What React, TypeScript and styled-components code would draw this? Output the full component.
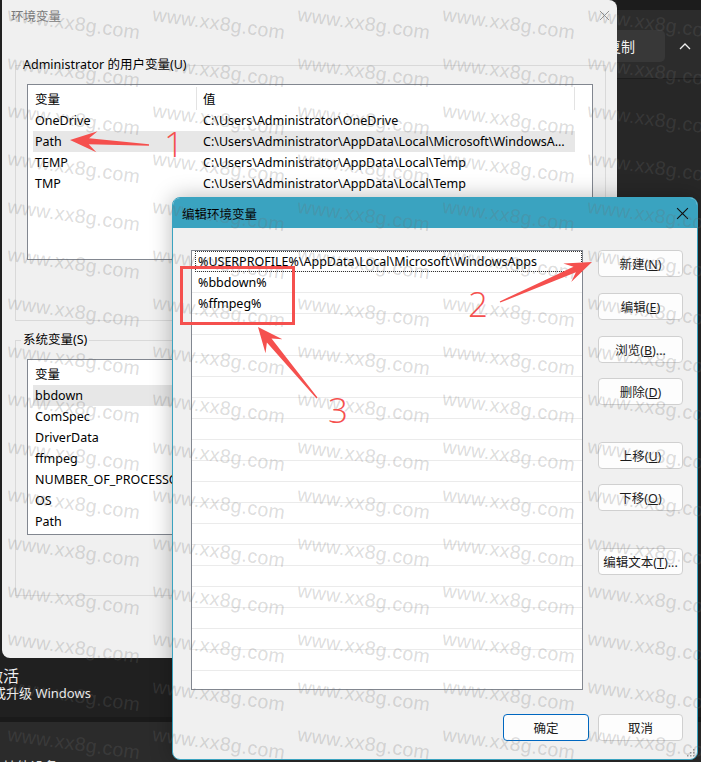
import React from "react";
import styled, { createGlobalStyle } from "styled-components";

const FONT = `"Noto Sans", "Noto Sans CJK SC", sans-serif`;

const GlobalStyle = createGlobalStyle`
  html, body { margin: 0; padding: 0; background: #202020; }
  body { font-family: ${FONT}; font-size: 12.5px; color: #000; }
  * { box-sizing: border-box; }
`;

const Page = styled.div`
  position: relative;
  width: 701px;
  height: 762px;
  overflow: hidden;
  background: #202020;
  font-family: ${FONT};
`;

const TopRow = styled.div`
  display: flex;
  height: 658px;
`;

const BackDialog = styled.div`
  margin-left: 2px;
  width: 615px;
  height: 658px;
  background: #f0f0f0;
  border-radius: 0 8px 8px 8px;
  display: flex;
  flex-direction: column;
  overflow: hidden;
`;

const BackTitleBar = styled.div`
  height: 30px;
  flex: none;
  display: flex;
  align-items: center;
  justify-content: space-between;
  padding: 0 7px 0 9px;
  color: #7a7a7a;
  font-size: 12.5px;
`;

const GroupBox = styled.fieldset<{ $top: number }>`
  margin: ${(p) => p.$top}px 0 0 13px;
  width: 591px;
  height: 264px;
  border: 1px solid #d9d9d9;
  padding: 11px 0 0 11px;
  min-width: 0;
`;

const GroupLabel = styled.legend`
  font-size: 12.5px;
  line-height: 16px;
  padding: 0 2px;
  margin-left: -6px;
  color: #000;
`;

const ListBox = styled.div<{ $h: number }>`
  width: 566px;
  height: ${(p) => p.$h}px;
  background: #fff;
  border: 1px solid #828790;
  padding-left: 5px;
  overflow: hidden;
`;

const ListHeader = styled.div`
  display: flex;
  height: 25px;
  padding-top: 2px;
`;

const HeaderCell = styled.div<{ $w: number; $pl: number }>`
  width: ${(p) => p.$w}px;
  flex: none;
  padding-left: ${(p) => p.$pl}px;
  border-right: 1px solid #e3e3e3;
  display: flex;
  align-items: center;
  font-size: 12.5px;
`;

const ListRow = styled.div<{ $sel?: boolean }>`
  display: flex;
  width: 542px;
  height: 21px;
  align-items: center;
  background: ${(p) => (p.$sel ? "#e7e7e7" : "transparent")};
  font-size: 12.5px;
  white-space: nowrap;
`;

const NameCell = styled.div`
  width: 164px;
  flex: none;
  padding-left: 2px;
  overflow: visible;
`;

const ValueCell = styled.div`
  width: 378px;
  flex: none;
  padding: 0 10px 0 6px;
  overflow: hidden;
  text-overflow: ellipsis;
`;

const RightPanel = styled.div`
  flex: 1;
  display: flex;
  flex-direction: column;
  background: #272727;
`;

const TopStrip = styled.div`
  height: 10px;
  background: #1c1c1c;
`;

const Toolbar = styled.div`
  height: 69px;
  background: #2c2c2c;
  border-bottom: 1px solid #1e1e1e;
  display: flex;
  align-items: flex-start;
  padding-top: 20px;
`;

const CopyButton = styled.div`
  width: 48px;
  height: 32px;
  background: #383838;
  border-radius: 0 5px 5px 0;
  display: flex;
  align-items: center;
  justify-content: flex-end;
  padding-right: 30px;
  overflow: hidden;
  white-space: nowrap;
  color: #f2f2f2;
  font-size: 14px;
`;

const ChevronBox = styled.div`
  flex: 1;
  height: 32px;
  display: flex;
  align-items: center;
  justify-content: center;
  padding-left: 4px;
`;

const BottomArea = styled.div`
  height: 104px;
  display: flex;
  flex-direction: column;
`;

const Activation = styled.div`
  height: 59px;
  padding-top: 9px;
  background: #202020;
  overflow: hidden;
  color: #f0f0f0;
  white-space: nowrap;
`;

const ActLine = styled.div<{ $size: number; $shift: number; $lh: number }>`
  font-size: ${(p) => p.$size}px;
  line-height: ${(p) => p.$lh}px;
  margin-left: ${(p) => p.$shift}px;
`;

const Separator = styled.div`
  height: 5px;
  background: #1a1a1a;
`;

const SettingsRow = styled.div`
  flex: 1;
  background: #2b2b2b;
  padding-top: 34px;
  color: #e0e0e0;
  font-size: 14px;
  white-space: nowrap;
  overflow: hidden;
  margin-left: -40px;
`;

const FrontDialog = styled.div`
  position: absolute;
  left: 172px;
  top: 197px;
  width: 526px;
  height: 563px;
  z-index: 2;
  background: #f0f0f0;
  border: 1px solid #3aa3c0;
  border-radius: 8px;
  overflow: hidden;
  box-shadow: 0 0 22px rgba(0, 0, 0, 0.28);
  display: flex;
  flex-direction: column;
`;

const FrontTitleBar = styled.div`
  height: 30px;
  flex: none;
  background: #3aa3c0;
  display: flex;
  align-items: center;
  justify-content: space-between;
  padding: 0 8px 0 9px;
  font-size: 12.5px;
  color: #000;
`;

const FrontBody = styled.div`
  display: flex;
  gap: 15px;
  padding: 22px 14px 0 18px;
`;

const EditList = styled.div`
  width: 392px;
  height: 440px;
  flex: none;
  background: #fff;
  border: 1px solid #828790;
  overflow: hidden;
`;

const EditRow = styled.div<{ $focus?: boolean }>`
  height: 21px;
  border-bottom: 1px solid #ebebeb;
  display: flex;
  align-items: center;
  font-size: 12.5px;
  white-space: nowrap;
  outline: ${(p) => (p.$focus ? "1px dotted #333" : "none")};
  outline-offset: -1px;
  margin-left: ${(p) => (p.$focus ? "3px" : "0")};
  padding-left: ${(p) => (p.$focus ? "3px" : "6px")};
`;

const ButtonColumn = styled.div`
  width: 85px;
  display: flex;
  flex-direction: column;
`;

const WinButton = styled.div<{ $mt?: number; $w?: number; $primary?: boolean }>`
  margin-top: ${(p) => p.$mt ?? 0}px;
  width: ${(p) => p.$w ?? 85}px;
  height: 27px;
  flex: none;
  border: 1px solid ${(p) => (p.$primary ? "#0067c0" : "#d0d0d0")};
  border-radius: 4px;
  background: #fdfdfd;
  display: flex;
  align-items: center;
  justify-content: center;
  font-size: 12.5px;
  color: #1b1b1b;
  white-space: nowrap;
`;

const Footer = styled.div`
  display: flex;
  justify-content: flex-end;
  gap: 9px;
  margin-top: 24px;
  padding-right: 14px;
`;

const Grip = styled.svg`
  position: absolute;
  right: 2px;
  bottom: 2px;
`;

const WatermarkLayer = styled.div`
  position: absolute;
  left: 7px;
  top: -1px;
  z-index: 3;
  display: grid;
  grid-template-columns: repeat(5, 145px);
  grid-auto-rows: 48px;
  pointer-events: none;
`;

const Mark = styled.div`
  align-self: center;
  justify-self: start;
  font-family: "Liberation Sans", sans-serif;
  font-size: 19.5px;
  letter-spacing: 0.3px;
  color: rgba(110, 110, 110, 0.24);
  white-space: nowrap;
  transform: rotate(8deg);
  transform-origin: center;
`;

const Annotations = styled.svg`
  position: absolute;
  left: 0;
  top: 0;
  z-index: 4;
  pointer-events: none;
`;

const RED = "#f5504e";

function arrow(tx: number, ty: number, px: number, py: number, L: number, W: number) {
  const dx = px - tx;
  const dy = py - ty;
  const len = Math.hypot(dx, dy);
  const ux = dx / len;
  const uy = dy / len;
  const nx = -uy;
  const ny = ux;
  const bx = px - ux * L;
  const by = py - uy * L;
  const cx = px - ux * L * 0.7;
  const cy = py - uy * L * 0.7;
  const s0 = 0.7;
  const s1 = 3;
  const pts = [
    [tx + nx * s0, ty + ny * s0],
    [cx + nx * s1, cy + ny * s1],
    [bx + nx * W, by + ny * W],
    [px, py],
    [bx - nx * W, by - ny * W],
    [cx - nx * s1, cy - ny * s1],
    [tx - nx * s0, ty - ny * s0],
  ];
  return pts.map((p) => `${p[0].toFixed(1)},${p[1].toFixed(1)}`).join(" ");
}

const users: [string, string][] = [
  ["OneDrive", "C:\\Users\\Administrator\\OneDrive"],
  ["Path", "C:\\Users\\Administrator\\AppData\\Local\\Microsoft\\WindowsApps;%bbdown%;%ffmpeg%;"],
  ["TEMP", "C:\\Users\\Administrator\\AppData\\Local\\Temp"],
  ["TMP", "C:\\Users\\Administrator\\AppData\\Local\\Temp"],
];

const systems: [string, string][] = [
  ["bbdown", "D:\\BBDown"],
  ["ComSpec", "C:\\Windows\\system32\\cmd.exe"],
  ["DriverData", "C:\\Windows\\System32\\Drivers\\DriverData"],
  ["ffmpeg", "D:\\ffmpeg\\bin"],
  ["NUMBER_OF_PROCESSORS", "8"],
  ["OS", "Windows_NT"],
  ["Path", "C:\\Windows\\system32;C:\\Windows;"],
];

const paths = [
  "%USERPROFILE%\\AppData\\Local\\Microsoft\\WindowsApps",
  "%bbdown%",
  "%ffmpeg%",
];

const CloseIcon = ({ size, color }: { size: number; color: string }) => (
  <svg width={size} height={size} viewBox="0 0 12 12">
    <path d="M1 1 L11 11 M11 1 L1 11" stroke={color} strokeWidth="1" fill="none" />
  </svg>
);

export default function App() {
  const emptyRows = Array.from({ length: 21 - paths.length });
  const marks = Array.from({ length: 80 });
  return (
    <Page>
      <GlobalStyle />
      <TopRow>
        <BackDialog>
          <BackTitleBar>
            <span>环境变量</span>
            <CloseIcon size={11} color="#8a8a8a" />
          </BackTitleBar>
          <GroupBox $top={27}>
            <GroupLabel>Administrator 的用户变量(U)</GroupLabel>
            <ListBox $h={176}>
              <ListHeader>
                <HeaderCell $w={164} $pl={2}>变量</HeaderCell>
                <HeaderCell $w={378} $pl={6}>值</HeaderCell>
              </ListHeader>
              {users.map(([n, v]) => (
                <ListRow key={n} $sel={n === "Path"}>
                  <NameCell>{n}</NameCell>
                  <ValueCell>{v}</ValueCell>
                </ListRow>
              ))}
            </ListBox>
          </GroupBox>
          <GroupBox $top={11}>
            <GroupLabel>系统变量(S)</GroupLabel>
            <ListBox $h={176}>
              <ListHeader>
                <HeaderCell $w={164} $pl={2}>变量</HeaderCell>
                <HeaderCell $w={378} $pl={6}>值</HeaderCell>
              </ListHeader>
              {systems.map(([n, v]) => (
                <ListRow key={n} $sel={n === "bbdown"}>
                  <NameCell>{n}</NameCell>
                  <ValueCell>{v}</ValueCell>
                </ListRow>
              ))}
            </ListBox>
          </GroupBox>
        </BackDialog>
        <RightPanel>
          <TopStrip />
          <Toolbar>
            <CopyButton>复制</CopyButton>
            <ChevronBox>
              <svg width="12" height="8" viewBox="0 0 12 8">
                <path d="M1 7 L6 2 L11 7" stroke="#f0f0f0" strokeWidth="1.3" fill="none" />
              </svg>
            </ChevronBox>
          </Toolbar>
        </RightPanel>
      </TopRow>
      <BottomArea>
        <Activation>
          <ActLine $size={16} $shift={-13} $lh={18}>激活</ActLine>
          <ActLine $size={13} $shift={-7} $lh={17}>或升级 Windows</ActLine>
        </Activation>
        <Separator />
        <SettingsRow>蓝牙和其他设备</SettingsRow>
      </BottomArea>

      <FrontDialog>
        <FrontTitleBar>
          <span>编辑环境变量</span>
          <CloseIcon size={13} color="#111" />
        </FrontTitleBar>
        <FrontBody>
          <EditList>
            {paths.map((p, i) => (
              <EditRow key={p} $focus={i === 0}>{p}</EditRow>
            ))}
            {emptyRows.map((_, i) => (
              <EditRow key={`e${i}`} />
            ))}
          </EditList>
          <ButtonColumn>
            <WinButton><span>新建(<u>N</u>)</span></WinButton>
            <WinButton $mt={16}><span>编辑(<u>E</u>)</span></WinButton>
            <WinButton $mt={16}><span>浏览(<u>B</u>)...</span></WinButton>
            <WinButton $mt={15}><span>删除(<u>D</u>)</span></WinButton>
            <WinButton $mt={37}><span>上移(<u>U</u>)</span></WinButton>
            <WinButton $mt={15}><span>下移(<u>O</u>)</span></WinButton>
            <WinButton $mt={37}><span>编辑文本(<u>T</u>)...</span></WinButton>
          </ButtonColumn>
        </FrontBody>
        <Footer>
          <WinButton $w={86} $primary>确定</WinButton>
          <WinButton>取消</WinButton>
        </Footer>
        <Grip width="8" height="8" viewBox="0 0 8 8">
          <rect x="6" y="0" width="1.5" height="1.5" fill="#9a9a9a" />
          <rect x="3" y="3" width="1.5" height="1.5" fill="#9a9a9a" />
          <rect x="6" y="3" width="1.5" height="1.5" fill="#9a9a9a" />
          <rect x="0" y="6" width="1.5" height="1.5" fill="#9a9a9a" />
          <rect x="3" y="6" width="1.5" height="1.5" fill="#9a9a9a" />
          <rect x="6" y="6" width="1.5" height="1.5" fill="#9a9a9a" />
        </Grip>
      </FrontDialog>

      <WatermarkLayer>
        {marks.map((_, i) => (
          <Mark key={i}>www.xx8g.com</Mark>
        ))}
      </WatermarkLayer>

      <Annotations width="701" height="762" viewBox="0 0 701 762">
        <polygon points={arrow(149, 145, 70, 140, 27, 10.5)} fill={RED} />
        <polygon points={arrow(500, 302, 592, 262, 27, 10)} fill={RED} />
        <polygon points={arrow(317, 398, 258, 327, 25, 11)} fill={RED} />
        <rect x="181.5" y="267.5" width="112" height="56" fill="none" stroke={RED} strokeWidth="3" />
        <text x="164" y="157" fill={RED} fontFamily="Open Sans, sans-serif" fontWeight="300" fontSize="35">1</text>
        <text x="468" y="317" fill={RED} fontFamily="Open Sans, sans-serif" fontWeight="300" fontSize="35">2</text>
        <text x="328" y="423" fill={RED} fontFamily="Open Sans, sans-serif" fontWeight="300" fontSize="35">3</text>
      </Annotations>
    </Page>
  );
}
